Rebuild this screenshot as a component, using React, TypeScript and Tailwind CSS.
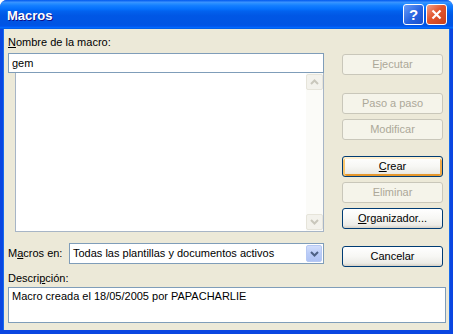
import React from 'react';

type BtnProps = {
  children: React.ReactNode;
  disabled?: boolean;
  isDefault?: boolean;
  className?: string;
};

const Btn = ({ children, disabled, isDefault, className = '' }: BtnProps) => {
  if (disabled) {
    return (
      <div className={`h-[21px] w-[101px] rounded-[3px] border border-[#C9C7BA] bg-[#F5F4EA] text-[#ACA899] flex items-center justify-center ${className}`}>
        {children}
      </div>
    );
  }
  return (
    <div
      className={`h-[21px] w-[101px] rounded-[3px] border border-[#003C74] bg-[linear-gradient(to_bottom,#FFFFFF_0%,#F7F7F4_50%,#ECEBE6_85%,#D6D0C5_100%)] text-black flex items-center justify-center ${
        isDefault ? 'shadow-[inset_0_2px_0_#FFF0CF,inset_2px_0_0_#F9C66E,inset_-2px_0_0_#EDA947,inset_0_-2px_0_#E5972D]' : ''
      } ${className}`}
    >
      {children}
    </div>
  );
};

const Chevron = ({ up, color }: { up?: boolean; color: string }) => (
  <svg width="9" height="6" viewBox="0 0 9 6">
    <path d={up ? 'M1 5 L4.5 1.5 L8 5' : 'M1 1 L4.5 4.5 L8 1'} fill="none" stroke={color} strokeWidth="2" />
  </svg>
);

const App = () => {
  return (
    <div className="w-[453px] h-[334px] bg-white font-['Liberation_Sans',Arial,sans-serif] text-[11px] leading-[13px] text-black">
      <div className="w-full h-full flex flex-col rounded-t-[7px] overflow-hidden bg-[#0A46E1]">
        {/* Title bar */}
        <div className="h-[29px] shrink-0 flex items-center pl-[7px] pr-[6px] bg-[linear-gradient(to_bottom,#0058EE_0%,#3A93FF_8%,#288EFF_12%,#127DFF_20%,#036FFC_32%,#0262EE_38%,#0057E5_54%,#0054E3_86%,#0055EB_90%,#005BF5_92%,#026AFE_95%,#0062EF_98%,#0052D6_100%)]">
          <span className="flex-1 text-white font-bold text-[13px] [text-shadow:1px_1px_#0F1089] pt-[1px]">Macros</span>
          <div className="flex gap-[2px]">
            <div className="w-[21px] h-[21px] rounded-[3px] border border-white bg-[linear-gradient(135deg,#6A9CF8_0%,#2663E0_55%,#1B4FCC_100%)] flex items-center justify-center text-white font-bold text-[15px]">
              ?
            </div>
            <div className="w-[21px] h-[21px] rounded-[3px] border border-white bg-[linear-gradient(135deg,#F2A08A_0%,#E2552D_45%,#C8401C_100%)] flex items-center justify-center">
              <svg width="11" height="11" viewBox="0 0 11 11">
                <path d="M1.5 1.5 L9.5 9.5 M9.5 1.5 L1.5 9.5" stroke="white" strokeWidth="2.2" />
              </svg>
            </div>
          </div>
        </div>

        {/* Client area */}
        <div className="flex-1 mx-[4px] mb-[4px] bg-[#ECE9D8] pl-[4px] pr-[6px] flex flex-col shadow-[-1px_0_0_#166AEE,1px_0_0_#166AEE]">
          <div className="flex items-start gap-[18px]">
            {/* Left column */}
            <div className="w-[316px] flex flex-col pt-[7px]">
              <div className="h-[13px]">
                <span className="underline">N</span>ombre de la macro:
              </div>
              <div className="mt-[4px] h-[20px] border border-[#7F9DB9] bg-white flex items-center pl-[3px]">gem</div>
              <div className="ml-[7px] h-[159px] border border-t-0 border-[#A7B5C6] bg-white flex justify-end">
                <div className="w-[17px] h-full bg-[#FBFBF8] flex flex-col justify-between py-[1px]">
                  <div className="h-[16px] rounded-[2px] border border-[#E6E4DA] bg-[#F3F2EC] flex items-center justify-center">
                    <Chevron up color="#C9C7BC" />
                  </div>
                  <div className="h-[16px] rounded-[2px] border border-[#E6E4DA] bg-[#F3F2EC] flex items-center justify-center">
                    <Chevron color="#C9C7BC" />
                  </div>
                </div>
              </div>
              <div className="mt-[11px] flex items-center">
                <span className="w-[61px]">
                  M<span className="underline">a</span>cros en:
                </span>
                <div className="flex-1 h-[21px] border border-[#7F9DB9] bg-white flex items-center pl-[3px] pr-[1px]">
                  <span className="flex-1">Todas las plantillas y documentos activos</span>
                  <div className="w-[16px] h-[17px] rounded-[2px] border border-[#B6C8F3] bg-[linear-gradient(to_bottom,#D2DEFC_0%,#BACCF8_50%,#AFC3F4_100%)] flex items-center justify-center">
                    <Chevron color="#4D6185" />
                  </div>
                </div>
              </div>
            </div>

            {/* Right column: buttons */}
            <div className="flex flex-col">
              <Btn disabled className="mt-[25px]">Ejecutar</Btn>
              <Btn disabled className="mt-[18px]">Paso a paso</Btn>
              <Btn disabled className="mt-[5px]">Modificar</Btn>
              <Btn isDefault className="mt-[16px]">
                <span>
                  <span className="underline">C</span>rear
                </span>
              </Btn>
              <Btn disabled className="mt-[5px]">Eliminar</Btn>
              <Btn className="mt-[5px]">
                <span>
                  <span className="underline">O</span>rganizador...
                </span>
              </Btn>
              <Btn className="mt-[17px]">Cancelar</Btn>
            </div>
          </div>

          {/* Description */}
          <div className="mt-[5px] h-[13px]">
            Descri<span className="underline">p</span>ción:
          </div>
          <div className="mt-[2px] h-[36px] w-[438px] border border-[#7F9DB9] bg-white pl-[3px] pt-[2px]">
            Macro creada el 18/05/2005 por PAPACHARLIE
          </div>
        </div>
      </div>
    </div>
  );
};

export default App;
